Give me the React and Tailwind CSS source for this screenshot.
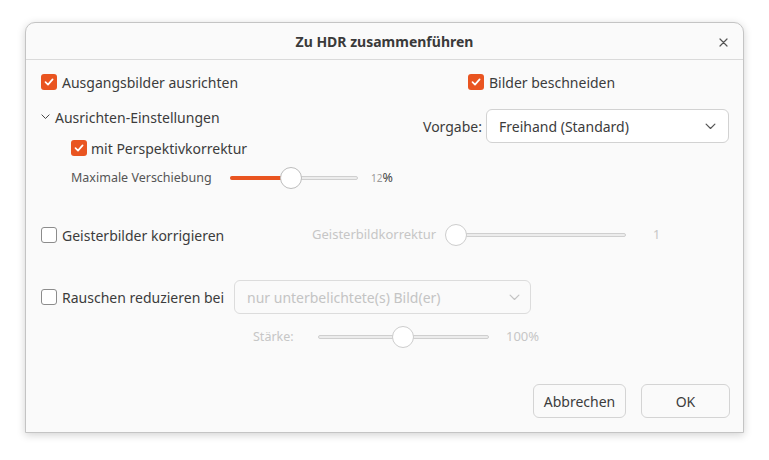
import React from 'react';

const font = { fontFamily: '"Noto Sans", "Open Sans", sans-serif' };

const Check = ({ checked }) =>
  checked ? (
    <span className="w-[16px] h-[16px] rounded-[3px] bg-[#e95420] flex items-center justify-center shrink-0">
      <svg width="10" height="10" viewBox="0 0 10 10" fill="none">
        <path d="M1.5 5.2 L4 7.6 L8.6 2.4" stroke="white" strokeWidth="1.7" strokeLinecap="round" strokeLinejoin="round" />
      </svg>
    </span>
  ) : (
    <span className="w-[16px] h-[16px] rounded-[3px] border border-[#8c8c8c] bg-white shrink-0" />
  );

const Chevron = ({ color = '#555', size = 10 }) => (
  <svg width={size} height={size * 0.6} viewBox="0 0 10 6" fill="none">
    <path d="M1 1 L5 5 L9 1" stroke={color} strokeWidth="1.1" strokeLinecap="round" strokeLinejoin="round" />
  </svg>
);

// simple slider, fill + knob positioned by value
const Slider = ({ width, pos, fill, disabled }) => (
  <div className="relative h-[22px] flex items-center" style={{ width }}>
    <div className="w-full h-[4px] rounded-full border border-[#cfcfcf] bg-[#ececec]" />
    {fill && (
      <div className="absolute left-0 h-[4px] rounded-full bg-[#e95420]" style={{ width: pos }} />
    )}
    <div
      className={`absolute top-0 w-[22px] h-[22px] rounded-full bg-white border ${disabled ? 'border-[#cdcdcd]' : 'border-[#bdbdbd]'}`}
      style={{ left: pos - 11 }}
    />
  </div>
);

export default function App() {
  return (
    <div className="w-[769px] h-[460px] bg-white pt-[22px] pl-[25px]" style={font}>
      <div className="w-[719px] h-[411px] bg-[#fafafa] border border-[#c4c4c4] rounded-t-[10px] shadow-[0_2px_8px_rgba(0,0,0,0.18)] flex flex-col text-[#3c3c3c]">
        {/* header */}
        <div className="relative h-[37px] border-b border-[#dadada] flex items-center justify-center shrink-0">
          <span className="text-[14px] font-bold text-[#3a3a3a]">Zu HDR zusammenführen</span>
          <svg className="absolute right-[15px] top-[15px]" width="9" height="9" viewBox="0 0 9 9" fill="none">
            <path d="M1 1 L8 8 M8 1 L1 8" stroke="#555" strokeWidth="1.2" strokeLinecap="round" />
          </svg>
        </div>

        <div className="flex-1 flex flex-col text-[14px]">
          {/* top section */}
          <div className="flex">
            <div className="w-[396px] pl-[15px] pt-[13px] flex flex-col">
              <div className="flex items-center gap-[5px] h-[18px]">
                <Check checked />
                <span>Ausgangsbilder ausrichten</span>
              </div>
              <div className="flex items-center gap-[5px] mt-[17px] h-[18px]">
                <Chevron size={9} color="#444" />
                <span>Ausrichten-Einstellungen</span>
              </div>
              <div className="flex items-center gap-[4px] mt-[13px] pl-[30px] h-[18px]">
                <Check checked />
                <span>mit Perspektivkorrektur</span>
              </div>
              <div className="flex items-center mt-[10px] pl-[30px] h-[22px]">
                <span className="text-[12.5px] text-[#555] w-[159px]">Maximale Verschiebung</span>
                <Slider width={128} pos={61} fill />
                <span className="ml-[13px] text-[10px] text-[#999]">12</span>
                <span className="text-[12.5px] text-[#444]">%</span>
              </div>
            </div>
            <div className="flex-1 pt-[13px] flex flex-col">
              <div className="flex items-center gap-[5px] h-[18px] pl-[46px]">
                <Check checked />
                <span>Bilder beschneiden</span>
              </div>
              <div className="flex items-center mt-[18px]">
                <span className="w-[64px] text-right pr-[4px]">Vorgabe:</span>
                <div className="w-[243px] h-[34px] rounded-[6px] border border-[#d2d2d2] bg-white flex items-center justify-between pl-[12px] pr-[12px]">
                  <span>Freihand (Standard)</span>
                  <Chevron size={11} color="#555" />
                </div>
              </div>
            </div>
          </div>

          {/* ghost row */}
          <div className="flex items-center pl-[15px] mt-[35px] h-[22px]">
            <div className="flex items-center gap-[5px] w-[271px]">
              <Check />
              <span>Geisterbilder korrigieren</span>
            </div>
            <span className="text-[13px] text-[#c6c6c6] w-[134px]">Geisterbildkorrektur</span>
            <Slider width={180} pos={10} disabled />
            <span className="ml-[27px] text-[12.5px] text-[#c6c6c6]">1</span>
          </div>

          {/* noise row */}
          <div className="flex items-center pl-[15px] mt-[34px]">
            <div className="flex items-center gap-[5px] w-[193px]">
              <Check />
              <span>Rauschen reduzieren bei</span>
            </div>
            <div className="w-[297px] h-[34px] rounded-[6px] border border-[#dcdcdc] bg-[#fafafa] flex items-center justify-between pl-[12px] pr-[10px]">
              <span className="text-[#c4c4c4]">nur unterbelichtete(s) Bild(er)</span>
              <Chevron size={11} color="#c4c4c4" />
            </div>
          </div>
          <div className="flex items-center pl-[227px] mt-[12px] h-[22px]">
            <span className="text-[12.5px] text-[#c6c6c6] w-[65px]">Stärke:</span>
            <Slider width={171} pos={85} disabled />
            <span className="ml-[17px] text-[13px] text-[#c6c6c6]">100%</span>
          </div>

          {/* buttons */}
          <div className="flex justify-end gap-[15px] pr-[13px] mt-auto pb-[14px]">
            <div className="w-[93px] h-[34px] rounded-[6px] border border-[#d4d4d4] flex items-center justify-center">Abbrechen</div>
            <div className="w-[89px] h-[34px] rounded-[6px] border border-[#d4d4d4] flex items-center justify-center">OK</div>
          </div>
        </div>
      </div>
    </div>
  );
}
